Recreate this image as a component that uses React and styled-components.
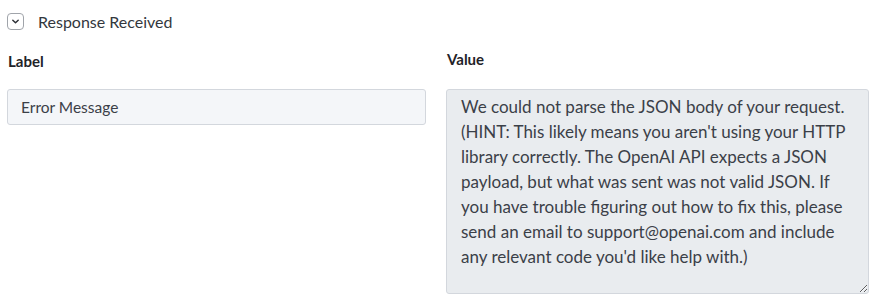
import React from "react";
import styled, { createGlobalStyle } from "styled-components";

const GlobalStyle = createGlobalStyle`
  body {
    margin: 0;
    background: #ffffff;
    font-family: Lato, "Open Sans", sans-serif;
    color: #2d3748;
  }
`;

const Page = styled.div`
  padding: 12px 2px 0 7px;
`;

const Header = styled.div`
  display: flex;
  align-items: center;
  gap: 14px;
  height: 18px;
`;

const Toggle = styled.span`
  width: 15px;
  height: 15px;
  border: 1px solid #a0a4aa;
  border-radius: 4px;
  display: flex;
  align-items: center;
  justify-content: center;
  background: #fff;
  svg {
    width: 9px;
    height: 9px;
  }
`;

const HeaderText = styled.span`
  font-size: 16px;
  color: #33373d;
`;

const Columns = styled.div`
  display: grid;
  grid-template-columns: 419px 1fr;
  column-gap: 20px;
  margin-top: 22px;
`;

const Field = styled.div`
  display: flex;
  flex-direction: column;
`;

const FieldLabel = styled.div`
  font-size: 15px;
  font-weight: 700;
  color: #1f2328;
  height: 37px;
  padding-left: 1px;
  line-height: 18px;
  margin-top: ${(p) => p.$top}px;
  margin-bottom: ${(p) => -p.$top}px;
`;

const Input = styled.div`
  height: 34px;
  border: 1px solid #d3d7dd;
  border-radius: 3px;
  background: #f4f6f9;
  display: flex;
  align-items: center;
  padding-left: 13px;
  font-size: 15.5px;
  color: #3b4048;
`;

const TextArea = styled.textarea`
  height: 205px;
  box-sizing: border-box;
  border: 1px solid #d3d7dd;
  border-radius: 3px;
  background: #e9ecef;
  padding: 4px 14px;
  font-family: Lato, "Open Sans", sans-serif;
  font-size: 17px;
  line-height: 25px;
  color: #3b4048;
  resize: vertical;
  margin: 0;
  outline: none;
`;

const message =
  "We could not parse the JSON body of your request. (HINT: This likely means you aren't using your HTTP library correctly. The OpenAI API expects a JSON payload, but what was sent was not valid JSON. If you have trouble figuring out how to fix this, please send an email to support@openai.com and include any relevant code you'd like help with.)";

export default function App() {
  return (
    <>
      <GlobalStyle />
      <Page>
        <Header>
          <Toggle>
            <svg viewBox="0 0 10 10" fill="none" stroke="#2d3036" strokeWidth="1.6" strokeLinecap="round" strokeLinejoin="round">
              <path d="M2 3.5 L5 6.5 L8 3.5" />
            </svg>
          </Toggle>
          <HeaderText>Response Received</HeaderText>
        </Header>
        <Columns>
          <Field>
            <FieldLabel $top={0}>Label</FieldLabel>
            <Input>Error Message</Input>
          </Field>
          <Field>
            <FieldLabel $top={-2}>Value</FieldLabel>
            <TextArea readOnly value={message} />
          </Field>
        </Columns>
      </Page>
    </>
  );
}
